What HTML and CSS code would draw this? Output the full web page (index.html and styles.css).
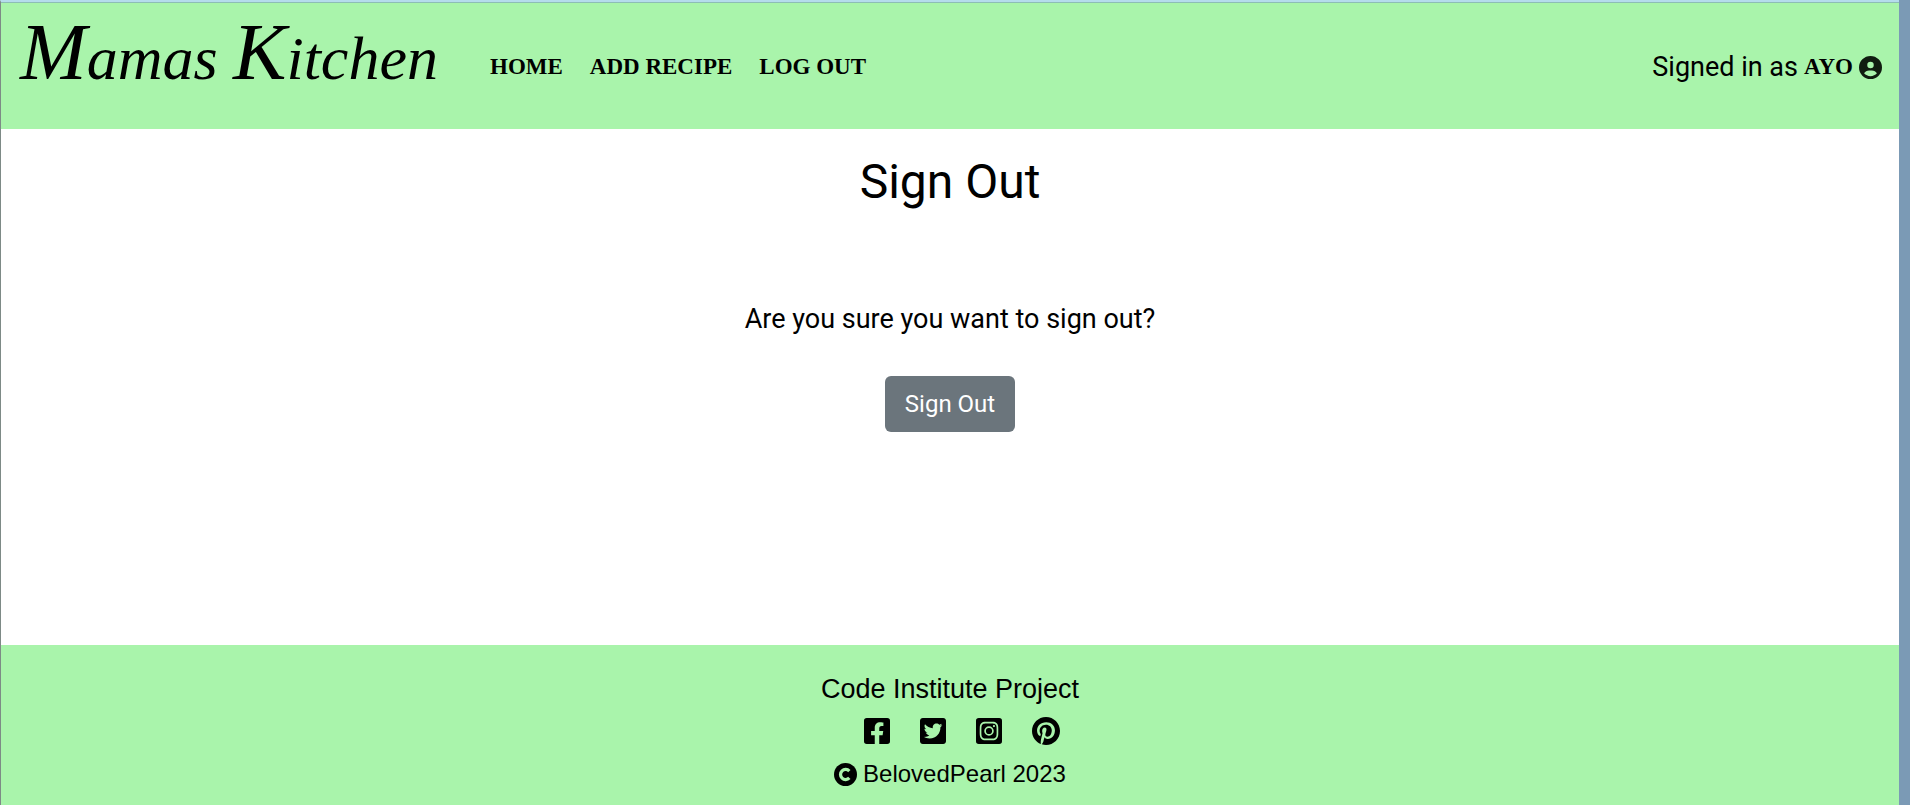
FILE: index.html
```html
<!DOCTYPE html>
<html lang="en">
<head>
<meta charset="utf-8">
<meta name="viewport" content="width=device-width, initial-scale=1">
<title>Mamas Kitchen - Sign Out</title>
<link rel="stylesheet" href="styles.css">
</head>
<body>
<div class="page">
  <header class="header">
    <a class="brand" href="#"><span class="brand-cap">M</span>amas <span class="brand-cap">K</span>itchen</a>
    <nav class="nav">
      <a href="#">HOME</a>
      <a href="#">ADD RECIPE</a>
      <a href="#">LOG OUT</a>
    </nav>
    <p class="user">Signed in as <span class="user-name">AYO</span>
      <svg class="user-icon" viewBox="0 0 512 512" aria-hidden="true"><path fill-rule="evenodd" d="M399 384.200C376.900 345.800 335.400 320 288 320H224c-47.400 0-88.900 25.800-111 64.200c35.200 39.200 86.200 63.800 143 63.800s107.800-24.700 143-63.800zM0 256a256 256 0 1 1 512 0A256 256 0 1 1 0 256zm256 16a72 72 0 1 0 0-144 72 72 0 1 0 0 144z"/></svg>
    </p>
  </header>
  <main class="main">
    <h1 class="title">Sign Out</h1>
    <p class="question">Are you sure you want to sign out?</p>
    <form><button class="button" type="button">Sign Out</button></form>
  </main>
  <footer class="footer">
    <p class="project">Code Institute Project</p>
    <div class="social">
      <a href="#" aria-label="Facebook"><svg class="icon" viewBox="0 32 448 448"><path d="M400 32H48A48 48 0 0 0 0 80v352a48 48 0 0 0 48 48h137.25V327.69h-63V256h63v-54.64c0-62.15 37-96.48 93.67-96.48 27.14 0 55.52 4.84 55.52 4.84v61h-31.27c-30.81 0-40.42 19.12-40.42 38.73V256h68.78l-11 71.69h-57.78V480H400a48 48 0 0 0 48-48V80a48 48 0 0 0-48-48z"/></svg></a>
      <a href="#" aria-label="Twitter"><svg class="icon" viewBox="0 32 448 448"><path d="M400 32H48C21.5 32 0 53.5 0 80v352c0 26.5 21.5 48 48 48h352c26.5 0 48-21.5 48-48V80c0-26.5-21.5-48-48-48zm-48.9 158.8c.2 2.8.2 5.7.2 8.5 0 86.700-66 186.600-186.600 186.600-37.200 0-71.700-10.800-100.700-29.400 5.300.6 10.400.8 15.800.8 30.700 0 58.900-10.400 81.400-28-28.800-.6-53-19.500-61.300-45.500 10.100 1.500 19.200 1.500 29.600-1.200-30-6.100-52.500-32.500-52.500-64.400v-.8c8.700 4.900 18.900 7.900 29.600 8.300a65.447 65.447 0 0 1-29.200-54.600c0-12.200 3.200-23.400 8.900-33.100 32.300 39.800 80.800 65.800 135.200 68.600-9.300-44.500 24-80.600 64-80.600 18.900 0 35.900 7.900 47.900 20.700 14.800-2.800 29-8.300 41.600-15.800-4.900 15.200-15.200 28-28.800 36.100 13.200-1.400 26-5.100 37.800-10.200-8.900 13.100-20.100 24.700-32.900 34z"/></svg></a>
      <a href="#" aria-label="Instagram"><svg class="icon" viewBox="0 32 448 448"><path d="M224,202.66A53.34,53.34,0,1,0,277.36,256,53.38,53.38,0,0,0,224,202.66Zm124.71-41a54,54,0,0,0-30.41-30.41c-21-8.29-71-6.43-94.3-6.43s-73.25-1.93-94.31,6.43a54,54,0,0,0-30.41,30.41c-8.28,21-6.43,71.05-6.43,94.33S91,329.26,99.32,350.33a54,54,0,0,0,30.41,30.41c21,8.29,71,6.43,94.31,6.43s73.24,1.93,94.3-6.43a54,54,0,0,0,30.41-30.41c8.35-21,6.43-71.05,6.43-94.33S357.1,182.74,348.75,161.67ZM224,338a82,82,0,1,1,82-82A81.9,81.9,0,0,1,224,338Zm85.38-148.3a19.14,19.14,0,1,1,19.13-19.14A19.1,19.1,0,0,1,309.42,189.74ZM400,32H48A48,48,0,0,0,0,80V432a48,48,0,0,0,48,48H400a48,48,0,0,0,48-48V80A48,48,0,0,0,400,32ZM382.88,322c-1.29,25.63-7.14,48.34-25.85,67s-41.4,24.63-67,25.85c-26.41,1.49-105.59,1.49-132,0-25.63-1.29-48.26-7.15-67-25.85s-24.63-41.42-25.85-67c-1.49-26.42-1.49-105.61,0-132,1.29-25.63,7.07-48.34,25.85-67s41.47-24.56,67-25.78c26.41-1.49,105.59-1.49,132,0,25.63,1.29,48.33,7.15,67,25.85s24.63,41.42,25.85,67.05C384.37,216.44,384.37,295.56,382.88,322Z"/></svg></a>
      <a href="#" aria-label="Pinterest"><svg class="icon icon-round" viewBox="0 8 496 496"><path d="M496 256c0 137-111 248-248 248-25.600 0-50.200-3.900-73.400-11.100 10.100-16.500 25.200-43.500 30.800-65 3-11.600 15.400-59 15.400-59 8.100 15.400 31.700 28.500 56.800 28.500 74.800 0 128.700-68.800 128.700-154.300 0-81.900-66.900-143.200-152.900-143.200-107 0-163.900 71.800-163.900 150.100 0 36.400 19.400 81.700 50.300 96.100 4.700 2.200 7.200 1.200 8.300-3.300.8-3.400 5-20.300 6.900-28.100.6-2.500.3-4.700-1.700-7.100-10.100-12.500-18.300-35.300-18.300-56.600 0-54.700 41.400-107.600 112-107.600 60.900 0 103.600 41.500 103.600 100.900 0 67.100-33.900 113.600-78 113.600-24.300 0-42.600-20.100-36.700-44.800 7-29.500 20.500-61.300 20.500-82.600 0-19-10.200-34.900-31.400-34.900-24.900 0-44.900 25.700-44.900 60.200 0 22 7.400 36.800 7.400 36.800s-24.500 103.800-29 123.200c-5 21.400-3 51.600-.9 71.200C65.400 450.900 0 361.100 0 256 0 119 111 8 248 8s248 111 248 248z"/></svg></a>
    </div>
    <p class="copyright">
      <svg class="copyright-icon" viewBox="0 0 24 24" aria-hidden="true"><circle cx="12" cy="12" r="12"/><path d="M16 8.400A5.300 5.300 0 1 0 16 15.600" fill="none" stroke="#a9f4ab" stroke-width="3.400"/></svg>
      <span>BelovedPearl 2023</span>
    </p>
  </footer>
</div>
</body>
</html>
```
FILE: styles.css
```css
* {
  box-sizing: border-box;
}

body {
  margin: 0;
  background: #7b9ab5;
  color: #000;
  font-family: Roboto, sans-serif;
  font-size: 27px;
  line-height: 40px;
}

h1,
p {
  margin: 0;
  font-weight: 400;
}

a {
  color: inherit;
  text-decoration: none;
}

.page {
  display: flex;
  flex-direction: column;
  min-height: 100vh;
  margin-right: 11px;
  border-top: 2px solid #b5dcec;
  border-left: 1px solid #7d8a86;
  background: #fff;
}

.header {
  display: flex;
  align-items: center;
  padding: 2px 17px 0 19px;
  border-top: 1px solid #8dbdb5;
  background: #a9f4ab;
}

.brand {
  width: 470px;
  padding-bottom: 18px;
  font-family: "Liberation Serif", serif;
  font-size: 62px;
  font-style: italic;
  line-height: 106px;
  white-space: nowrap;
}

.brand-cap {
  font-size: 80px;
  line-height: 80px;
}

.nav {
  display: flex;
  gap: 27px;
  font-family: "Liberation Serif", serif;
  font-size: 23px;
  font-weight: 700;
}

.user {
  display: flex;
  align-items: center;
  gap: 6px;
  margin-left: auto;
}

.user-name {
  font-family: "Liberation Serif", serif;
  font-size: 23px;
  font-weight: 700;
}

.user-icon {
  width: 23px;
  height: 23px;
  fill: #101c10;
}

.main {
  display: flex;
  flex: 1;
  flex-direction: column;
  align-items: center;
  padding-top: 24px;
}

.title {
  margin-bottom: 88px;
  font-size: 48px;
  line-height: 58px;
}

.question {
  margin-bottom: 37px;
}

.button {
  display: block;
  height: 56px;
  padding: 0 20px;
  border: 0;
  border-radius: 6px;
  background: #6b757c;
  color: #fff;
  font-family: inherit;
  font-size: 24px;
}

.footer {
  display: flex;
  flex-direction: column;
  align-items: center;
  padding: 24px 0 11px;
  background: #a9f4ab;
  font-family: "Liberation Sans", sans-serif;
}

.social {
  display: flex;
  align-items: center;
  gap: 30px;
  height: 43px;
  margin-bottom: 2px;
  padding-left: 24px;
}

.social a {
  display: flex;
}

.icon {
  width: 26px;
  height: 26px;
}

.icon-round {
  width: 28px;
  height: 28px;
}

.copyright {
  display: flex;
  align-items: center;
  gap: 6px;
  font-size: 24px;
}

.copyright-icon {
  width: 23px;
  height: 23px;
}
```
